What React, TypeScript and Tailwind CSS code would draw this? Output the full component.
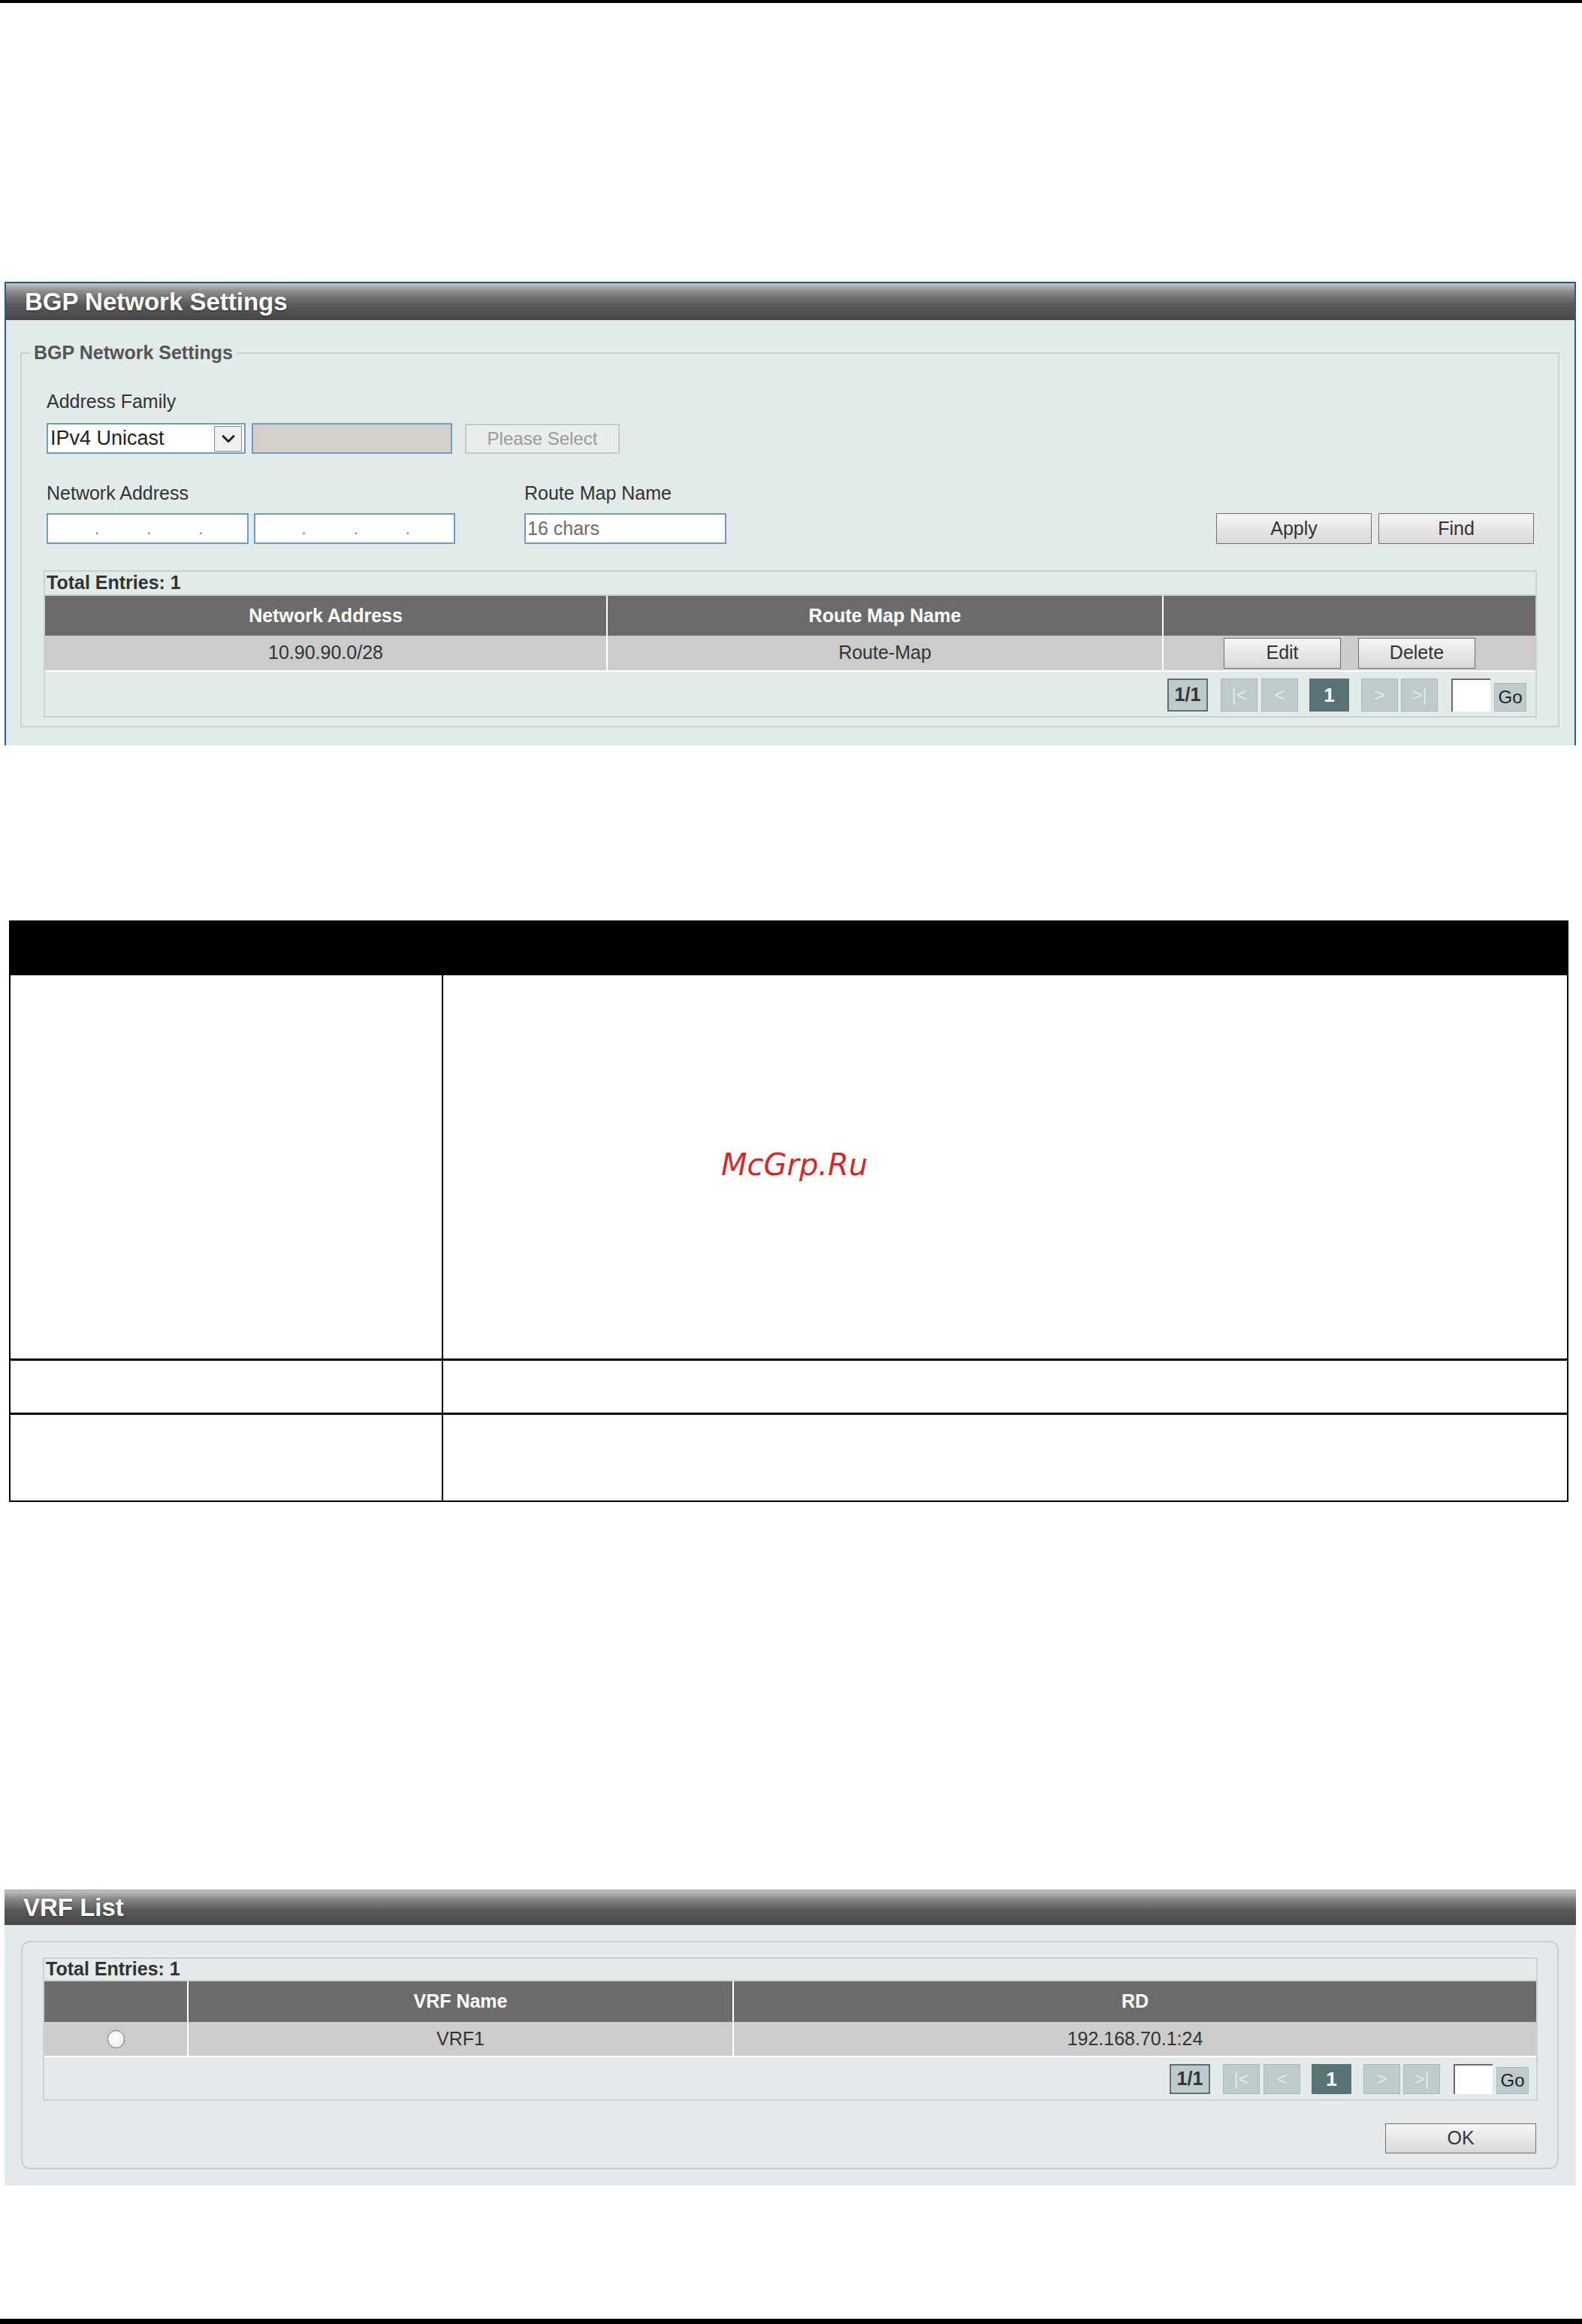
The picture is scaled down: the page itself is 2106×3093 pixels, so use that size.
import { ChevronDown } from 'lucide-react'

const btn =
  'flex items-center justify-center border-[1.5px] border-[#6f6f6f] bg-[linear-gradient(to_bottom,#f6f6f6,#d8d8d8)] text-[25px] text-[#333]'
const titleBar =
  'flex items-center pl-[25px] text-[33px] font-bold text-white bg-[linear-gradient(to_bottom,#c4c4c4_0%,#8c8c8c_22%,#5c5c5c_55%,#464646_100%)] [text-shadow:0_1px_2px_rgba(0,0,0,0.5)]'

function Pager({ tall }: { tall: boolean }) {
  const h = tall ? 'h-[44px]' : 'h-[40px]'
  const go = tall ? 'h-[38px]' : 'h-[36px]'
  const nav = `${h} w-[49px] flex items-center justify-center bg-[#bdcbcd] border border-[#a8b9bb] text-[24px] text-[#e2eaea]`
  return (
    <div className="flex items-stretch">
      <div className={`${h} w-[54px] flex items-center justify-center bg-[#bdcbcd] border-2 border-[#5b7173] text-[25px] font-bold text-[#333]`}>
        1/1
      </div>
      <div className={`${nav} ml-[17px]`}>|&lt;</div>
      <div className={`${nav} ml-[5px]`}>&lt;</div>
      <div className={`${h} w-[53px] ml-[15px] flex items-center justify-center bg-[#587375] text-[26px] font-bold text-white`}>
        1
      </div>
      <div className={`${nav} ml-[16px]`}>&gt;</div>
      <div className={`${nav} ml-[4px]`}>&gt;|</div>
      <div className={`${h} w-[52px] ml-[18px] bg-white border-t-2 border-l-2 border-[#6a6a6a]`} />
      <div className={`${go} w-[43px] ml-[5px] self-end flex items-center justify-center bg-[#bdcbcd] border border-[#a8b9bb] text-[24px] text-[#222]`}>
        Go
      </div>
    </div>
  )
}

function IpBox() {
  return (
    <div className="h-[41px] w-[269px] bg-white border-2 border-[#6b9bc6] flex items-center pl-[62px] gap-[63px] text-[22px] text-[#777]">
      <span>.</span>
      <span>.</span>
      <span>.</span>
    </div>
  )
}

function BgpPanel() {
  return (
    <div className="mt-[371px] ml-[6px] w-[2092px] h-[617px] border-x-2 border-t-2 border-[#235d8a] bg-[#e2eaea] flex flex-col">
      <div className={`${titleBar} h-[49px] shrink-0`}>BGP Network Settings</div>
      <fieldset className="mt-[29px] ml-[19px] mr-[20px] h-[513px] border-2 border-[#c8d2d3]">
        <legend className="ml-[11px] px-[5px] text-[25px] leading-[29px] font-bold text-[#555]">BGP Network Settings</legend>
        <div className="pl-[33px] pr-[28px]">
          <div className="pt-[36px] text-[25px] leading-[29px] text-[#333]">Address Family</div>
          <div className="mt-[14px] flex items-center">
            <div className="h-[41px] w-[265px] bg-white border-2 border-[#6b9bc6] flex items-center pl-[3px] pr-[3px]">
              <span className="flex-1 text-[27px] text-[#222]">IPv4 Unicast</span>
              <span className="h-[34px] w-[37px] border border-[#8a8a8a] bg-[#f0f0f0] flex items-center justify-center">
                <ChevronDown size={28} strokeWidth={2.6} className="text-[#222]" />
              </span>
            </div>
            <div className="ml-[8px] h-[41px] w-[267px] bg-[#d4d0c8] border-2 border-[#6b9bc6]" />
            <div className="ml-[17px] h-[40px] w-[206px] flex items-center justify-center border-2 border-[#c3c8c8] bg-[#e9eded] text-[24px] text-[#9a9a9a]">
              Please Select
            </div>
          </div>
          <div className="mt-[38px] flex items-end">
            <div className="w-[544px]">
              <div className="text-[25px] leading-[29px] text-[#333]">Network Address</div>
              <div className="mt-[12px] flex gap-[7px]">
                <IpBox />
                <IpBox />
              </div>
            </div>
            <div className="ml-[92px] w-[269px]">
              <div className="text-[25px] leading-[29px] text-[#333]">Route Map Name</div>
              <div className="mt-[12px] h-[41px] w-[269px] bg-white border-2 border-[#6b9bc6] flex items-center pl-[2px] text-[25px] text-[#6a6a6a]">
                16 chars
              </div>
            </div>
            <div className="ml-auto mr-[4px] flex gap-[9px]">
              <div className={`${btn} h-[41px] w-[207px]`}>Apply</div>
              <div className={`${btn} h-[41px] w-[207px]`}>Find</div>
            </div>
          </div>
          <div className="mt-[35px] -ml-[4px] border-2 border-[#c9d1d1]">
            <div className="h-[32px] flex items-center pl-[2px] text-[25px] font-bold text-[#333] border-b-2 border-[#c9d1d1]">
              Total Entries: 1
            </div>
            <div className="grid grid-cols-[749px_740px_1fr] h-[53px] bg-[#6b6b6b] text-[25px] font-bold text-white">
              <div className="flex items-center justify-center border-r-2 border-white">Network Address</div>
              <div className="flex items-center justify-center border-r-2 border-white">Route Map Name</div>
              <div />
            </div>
            <div className="grid grid-cols-[749px_740px_1fr] h-[48px] bg-[#cccccc] text-[25px] text-[#333] border-b-2 border-white">
              <div className="flex items-center justify-center border-r-2 border-white">10.90.90.0/28</div>
              <div className="flex items-center justify-center border-r-2 border-white">Route-Map</div>
              <div className="flex items-center justify-center gap-[23px]">
                <div className={`${btn} h-[41px] w-[156px]`}>Edit</div>
                <div className={`${btn} h-[41px] w-[156px]`}>Delete</div>
              </div>
            </div>
            <div className="h-[59px] flex justify-end items-start pt-[9px] pr-[12px]">
              <Pager tall />
            </div>
          </div>
        </div>
      </fieldset>
    </div>
  )
}

function ParamTable() {
  return (
    <div className="mt-[233px] ml-[12px] w-[2076px] h-[774px] border-2 border-black flex flex-col">
      <div className="h-[71px] bg-black shrink-0" />
      <div className="h-[513px] flex border-b-[3px] border-black">
        <div className="w-[576px] border-r-2 border-black" />
        <div className="flex-1 flex items-center pl-[370px] pb-[6px]">
          <span className="font-['DejaVu_Sans',sans-serif] italic text-[40px] text-[#d22a2a]">McGrp.Ru</span>
        </div>
      </div>
      <div className="h-[72px] flex border-b-[3px] border-black">
        <div className="w-[576px] border-r-2 border-black" />
        <div className="flex-1" />
      </div>
      <div className="flex-1 flex">
        <div className="w-[576px] border-r-2 border-black" />
        <div className="flex-1" />
      </div>
    </div>
  )
}

function VrfPanel() {
  return (
    <div className="mt-[516px] ml-[6px] w-[2092px] h-[394px] bg-[#e4e9eb] border-t border-[#9a9a9a] flex flex-col">
      <div className={`${titleBar} h-[46px] shrink-0`}>VRF List</div>
      <div className="mt-[21px] ml-[22px] mr-[23px] h-[304px] rounded-[12px] border-2 border-[#c8d0d2] pt-[20px] pl-[27px] pr-[26px]">
        <div className="border-2 border-[#c9d1d1]">
          <div className="h-[30px] flex items-center pl-[2px] text-[25px] font-bold text-[#333] border-b-2 border-[#c9d1d1]">
            Total Entries: 1
          </div>
          <div className="grid grid-cols-[192px_726px_1fr] h-[54px] bg-[#6b6b6b] text-[25px] font-bold text-white">
            <div className="border-r-2 border-white" />
            <div className="flex items-center justify-center border-r-2 border-white">VRF Name</div>
            <div className="flex items-center justify-center">RD</div>
          </div>
          <div className="grid grid-cols-[192px_726px_1fr] h-[47px] bg-[#cccccc] text-[25px] text-[#333] border-b-2 border-white">
            <div className="flex items-center justify-center border-r-2 border-white">
              <span className="h-[24px] w-[23px] rounded-full border-[1.5px] border-[#6f6f6f] bg-[radial-gradient(circle_at_40%_35%,#ffffff,#e6e6e6)]" />
            </div>
            <div className="flex items-center justify-center border-r-2 border-white">VRF1</div>
            <div className="flex items-center justify-center">192.168.70.1:24</div>
          </div>
          <div className="h-[56px] flex justify-end items-start pt-[9px] pr-[10px]">
            <Pager tall={false} />
          </div>
        </div>
        <div className="mt-[30px] flex justify-end pr-[2px]">
          <div className={`${btn} h-[40px] w-[201px]`}>OK</div>
        </div>
      </div>
    </div>
  )
}

export default function App() {
  return (
    <div className="w-[2106px] h-[3093px] bg-white flex flex-col font-['Liberation_Sans',Arial,sans-serif]">
      <div className="h-[4px] bg-black shrink-0" />
      <BgpPanel />
      <ParamTable />
      <VrfPanel />
      <div className="flex-1" />
      <div className="h-[7px] bg-black shrink-0" />
    </div>
  )
}
